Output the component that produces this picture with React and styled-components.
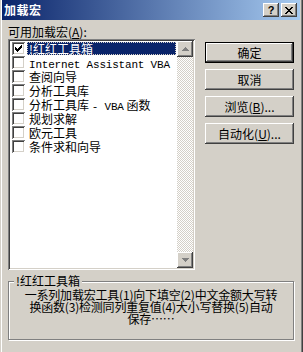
import React from 'react';
import styled, { createGlobalStyle } from 'styled-components';

const Global = createGlobalStyle`
  html, body { margin: 0; padding: 0; background: #D4D0C8; }
  body {
    font-family: "Noto Sans CJK SC", "Liberation Sans", sans-serif;
    font-size: 12px;
    color: #000;
  }
  #root { width: 303px; height: 352px; }
`;

const raised = `
  box-shadow: inset -1px -1px #404040, inset 1px 1px #ffffff,
    inset -2px -2px #808080, inset 2px 2px #D4D0C8;
`;

const Window = styled.div`
  width: 303px;
  height: 352px;
  box-sizing: border-box;
  background: #D4D0C8;
  padding: 0 3px 0 2px;
  box-shadow: inset 1px 0 #D4D0C8, inset 2px 0 #ffffff,
    inset -1px 0 #404040, inset -2px 0 #808080;
  display: flex;
  flex-direction: column;
  overflow: hidden;
`;

const TitleBar = styled.div`
  height: 20px;
  flex: none;
  display: flex;
  align-items: center;
  padding: 0 3px 0 2px;
  background: linear-gradient(to right, #0A246A, #A6CAF0);
`;

const Title = styled.div`
  flex: 1;
  color: #fff;
  font-weight: bold;
  font-size: 12px;
  line-height: 14px;
  letter-spacing: 0.5px;
`;

const CapButton = styled.div`
  width: 16px;
  height: 14px;
  background: #D4D0C8;
  ${raised}
  display: flex;
  align-items: center;
  justify-content: center;
  font-family: "Liberation Sans", sans-serif;
  font-weight: bold;
  font-size: 11px;
  line-height: 14px;
  margin-left: ${p => p.$gap || 0}px;
`;

const Body = styled.div`
  flex: 1;
  padding: 5px 4px 0 6px;
  display: flex;
  flex-direction: column;
`;

const Label = styled.div`
  height: 14px;
  line-height: 14px;
  font-size: 12px;
`;

const U = styled.span`
  text-decoration: underline;
`;

const Mono = styled.span`
  font-family: "Liberation Mono", monospace;
  font-size: 11px;
  letter-spacing: -0.2px;
`;

const MainRow = styled.div`
  display: flex;
  align-items: flex-start;
`;

const ListBox = styled.div`
  width: 187px;
  height: 231px;
  box-sizing: border-box;
  padding: 2px;
  background: #fff;
  box-shadow: inset 1px 1px #808080, inset -1px -1px #ffffff,
    inset 2px 2px #404040, inset -2px -2px #D4D0C8;
  display: flex;
`;

const Rows = styled.div`
  flex: 1;
  display: flex;
  flex-direction: column;
`;

const Row = styled.div`
  height: 14px;
  display: flex;
  align-items: center;
  padding-left: 2px;
`;

const Check = styled.div`
  width: 13px;
  height: 13px;
  box-sizing: border-box;
  flex: none;
  background: #fff;
  box-shadow: inset 1px 1px #808080, inset -1px -1px #ffffff,
    inset 2px 2px #404040, inset -2px -2px #D4D0C8;
  display: flex;
  align-items: center;
  justify-content: center;
`;

const ItemText = styled.div`
  margin-left: 2px;
  margin-right: 1px;
  padding: 0 2px;
  height: 13px;
  line-height: 13px;
  white-space: nowrap;
  ${p => p.$sel ? `
    flex: 1;
    background: #0A246A;
    color: #fff;
    outline: 1px dotted #D4D0C8;
    outline-offset: -1px;
  ` : ''}
`;

const ScrollBar = styled.div`
  width: 16px;
  display: flex;
  flex-direction: column;
`;

const ArrowBtn = styled.div`
  width: 16px;
  height: 16px;
  flex: none;
  background: #D4D0C8;
  ${raised}
  display: flex;
  align-items: center;
  justify-content: center;
`;

const Track = styled.div`
  flex: 1;
  background: repeating-conic-gradient(#ffffff 0 25%, #D4D0C8 0 50%) 0 0 / 2px 2px;
`;

const ButtonCol = styled.div`
  margin-left: 10px;
  width: 89px;
  padding-top: 3px;
  display: flex;
  flex-direction: column;
  gap: 6px;
`;

const Button = styled.div`
  height: 21px;
  box-sizing: border-box;
  display: flex;
  align-items: center;
  justify-content: center;
  background: #D4D0C8;
  font-size: 12px;
  line-height: 14px;
  ${p => p.$default ? `
    border: 1px solid #000;
    box-shadow: inset -1px -1px #404040, inset 1px 1px #ffffff,
      inset -2px -2px #808080, inset 2px 2px #D4D0C8;
  ` : raised}
`;

const Group = styled.fieldset`
  margin: 5px 0 0 0;
  padding: 2px 4px 0 4px;
  width: 286px;
  height: 65px;
  box-sizing: border-box;
  border: 1px solid #808080;
  box-shadow: inset 1px 1px #ffffff, 1px 1px #ffffff;
`;

const Legend = styled.legend`
  margin-left: 1px;
  padding: 0 2px;
  font-size: 12px;
  line-height: 12px;
  background: #D4D0C8;
`;

const Desc = styled.div`
  text-align: center;
  font-size: 12px;
  line-height: 12px;
  letter-spacing: -0.2px;
  white-space: nowrap;
`;

const CheckMark = () => (
  <svg width="7" height="7" viewBox="0 0 7 7" shapeRendering="crispEdges">
    <path d="M0 2h1v1h1v1h1v-1h1v-1h1v-1h1v-1h1v3h-1v1h-1v1h-1v1h-1v1h-1v-1h-1v-1h-1v-1h-1z" fill="#000" />
  </svg>
);

const UpArrow = ({ down }) => (
  <svg width="7" height="4" viewBox="0 0 7 4" shapeRendering="crispEdges"
    style={down ? { transform: 'rotate(180deg)' } : undefined}>
    <path d="M3 0h1v1h1v1h1v1h1v1h-7v-1h1v-1h1v-1h1z" fill="#808080" />
  </svg>
);

const CloseX = () => (
  <svg width="8" height="7" viewBox="0 0 8 7" shapeRendering="crispEdges">
    <path d="M0 0h2v1h1v1h2v-1h1v-1h2v1h-1v1h-1v1h-1v1h1v1h1v1h1v1h-2v-1h-1v-1h-2v1h-1v1h-2v-1h1v-1h1v-1h1v-1h-1v-1h-1v-1h-1z" fill="#000" />
  </svg>
);

const items = [
  { label: '!红红工具箱', checked: true, sel: true },
  { label: <Mono>Internet Assistant VBA</Mono> },
  { label: '查阅向导' },
  { label: '分析工具库' },
  { label: <>分析工具库 <Mono>- VBA</Mono> 函数</> },
  { label: '规划求解' },
  { label: '欧元工具' },
  { label: '条件求和向导' },
];

export default function App() {
  return (
    <>
      <Global />
      <Window>
        <TitleBar>
          <Title>加载宏</Title>
          <CapButton>?</CapButton>
          <CapButton $gap={2}><CloseX /></CapButton>
        </TitleBar>
        <Body>
          <Label>可用加载宏(<U>A</U>):</Label>
          <MainRow>
            <ListBox>
              <Rows>
                {items.map((it, i) => (
                  <Row key={i}>
                    <Check>{it.checked && <CheckMark />}</Check>
                    <ItemText $sel={it.sel}>{it.label}</ItemText>
                  </Row>
                ))}
              </Rows>
              <ScrollBar>
                <ArrowBtn><UpArrow /></ArrowBtn>
                <Track />
                <ArrowBtn><UpArrow down /></ArrowBtn>
              </ScrollBar>
            </ListBox>
            <ButtonCol>
              <Button $default>确定</Button>
              <Button>取消</Button>
              <Button>浏览(<U>B</U>)...</Button>
              <Button>自动化(<U>U</U>)...</Button>
            </ButtonCol>
          </MainRow>
          <Group>
            <Legend>!红红工具箱</Legend>
            <Desc>
              一系列加载宏工具(1)向下填空(2)中文金额大写转<br />
              换函数(3)检测同列重复值(4)大小写替换(5)自动<br />
              保存……
            </Desc>
          </Group>
        </Body>
      </Window>
    </>
  );
}
